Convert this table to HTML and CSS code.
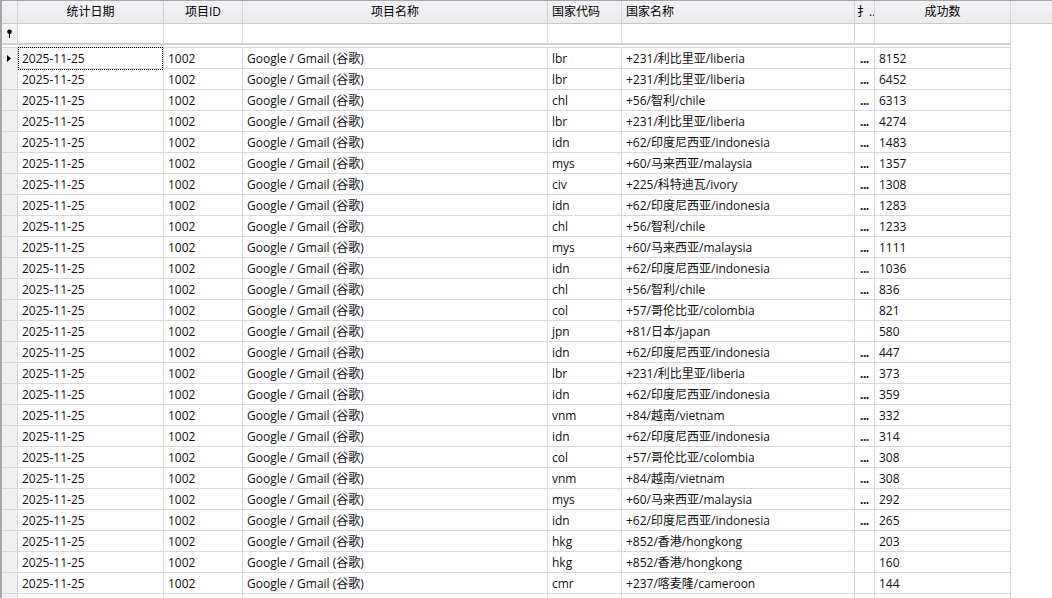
FILE: index.html
```html
<!DOCTYPE html>
<html>
<head>
<meta charset="utf-8">
<link rel="stylesheet" href="styles.css">
</head>
<body>
<div class="grid">
  <div class="row head">
    <div class="c ind"></div>
    <div class="c ctr">统计日期</div>
    <div class="c ctr">项目ID</div>
    <div class="c ctr">项目名称</div>
    <div class="c">国家代码</div>
    <div class="c">国家名称</div>
    <div class="c narrow">扌..</div>
    <div class="c ctr">成功数</div>
    <div class="c fill"></div>
  </div>
  <div class="row filter">
    <div class="c ind"><svg class="pin" width="7" height="9" viewBox="0 0 7 9"><circle cx="3.5" cy="2.8" r="2.3" fill="#000"/><rect x="3" y="4" width="1" height="5" fill="#000"/></svg></div>
    <div class="c"></div><div class="c"></div><div class="c"></div><div class="c"></div><div class="c"></div><div class="c"></div><div class="c"></div>
  </div>
  <div class="gap"></div>
  <div class="data">
    <div class="row"><div class="c ind"><svg class="tri" width="4" height="7" viewBox="0 0 4 7"><path d="M0 0L4 3.5L0 7Z" fill="#000"/></svg></div><div class="c focus">2025-11-25</div><div class="c">1002</div><div class="c">Google / Gmail (谷歌)</div><div class="c">lbr</div><div class="c">+231/利比里亚/liberia</div><div class="c dots">...</div><div class="c">8152</div></div>
    <div class="row"><div class="c ind"></div><div class="c">2025-11-25</div><div class="c">1002</div><div class="c">Google / Gmail (谷歌)</div><div class="c">lbr</div><div class="c">+231/利比里亚/liberia</div><div class="c dots">...</div><div class="c">6452</div></div>
    <div class="row"><div class="c ind"></div><div class="c">2025-11-25</div><div class="c">1002</div><div class="c">Google / Gmail (谷歌)</div><div class="c">chl</div><div class="c">+56/智利/chile</div><div class="c dots">...</div><div class="c">6313</div></div>
    <div class="row"><div class="c ind"></div><div class="c">2025-11-25</div><div class="c">1002</div><div class="c">Google / Gmail (谷歌)</div><div class="c">lbr</div><div class="c">+231/利比里亚/liberia</div><div class="c dots">...</div><div class="c">4274</div></div>
    <div class="row"><div class="c ind"></div><div class="c">2025-11-25</div><div class="c">1002</div><div class="c">Google / Gmail (谷歌)</div><div class="c">idn</div><div class="c">+62/印度尼西亚/indonesia</div><div class="c dots">...</div><div class="c">1483</div></div>
    <div class="row"><div class="c ind"></div><div class="c">2025-11-25</div><div class="c">1002</div><div class="c">Google / Gmail (谷歌)</div><div class="c">mys</div><div class="c">+60/马来西亚/malaysia</div><div class="c dots">...</div><div class="c">1357</div></div>
    <div class="row"><div class="c ind"></div><div class="c">2025-11-25</div><div class="c">1002</div><div class="c">Google / Gmail (谷歌)</div><div class="c">civ</div><div class="c">+225/科特迪瓦/ivory</div><div class="c dots">...</div><div class="c">1308</div></div>
    <div class="row"><div class="c ind"></div><div class="c">2025-11-25</div><div class="c">1002</div><div class="c">Google / Gmail (谷歌)</div><div class="c">idn</div><div class="c">+62/印度尼西亚/indonesia</div><div class="c dots">...</div><div class="c">1283</div></div>
    <div class="row"><div class="c ind"></div><div class="c">2025-11-25</div><div class="c">1002</div><div class="c">Google / Gmail (谷歌)</div><div class="c">chl</div><div class="c">+56/智利/chile</div><div class="c dots">...</div><div class="c">1233</div></div>
    <div class="row"><div class="c ind"></div><div class="c">2025-11-25</div><div class="c">1002</div><div class="c">Google / Gmail (谷歌)</div><div class="c">mys</div><div class="c">+60/马来西亚/malaysia</div><div class="c dots">...</div><div class="c">1111</div></div>
    <div class="row"><div class="c ind"></div><div class="c">2025-11-25</div><div class="c">1002</div><div class="c">Google / Gmail (谷歌)</div><div class="c">idn</div><div class="c">+62/印度尼西亚/indonesia</div><div class="c dots">...</div><div class="c">1036</div></div>
    <div class="row"><div class="c ind"></div><div class="c">2025-11-25</div><div class="c">1002</div><div class="c">Google / Gmail (谷歌)</div><div class="c">chl</div><div class="c">+56/智利/chile</div><div class="c dots">...</div><div class="c">836</div></div>
    <div class="row"><div class="c ind"></div><div class="c">2025-11-25</div><div class="c">1002</div><div class="c">Google / Gmail (谷歌)</div><div class="c">col</div><div class="c">+57/哥伦比亚/colombia</div><div class="c dots"></div><div class="c">821</div></div>
    <div class="row"><div class="c ind"></div><div class="c">2025-11-25</div><div class="c">1002</div><div class="c">Google / Gmail (谷歌)</div><div class="c">jpn</div><div class="c">+81/日本/japan</div><div class="c dots"></div><div class="c">580</div></div>
    <div class="row"><div class="c ind"></div><div class="c">2025-11-25</div><div class="c">1002</div><div class="c">Google / Gmail (谷歌)</div><div class="c">idn</div><div class="c">+62/印度尼西亚/indonesia</div><div class="c dots">...</div><div class="c">447</div></div>
    <div class="row"><div class="c ind"></div><div class="c">2025-11-25</div><div class="c">1002</div><div class="c">Google / Gmail (谷歌)</div><div class="c">lbr</div><div class="c">+231/利比里亚/liberia</div><div class="c dots">...</div><div class="c">373</div></div>
    <div class="row"><div class="c ind"></div><div class="c">2025-11-25</div><div class="c">1002</div><div class="c">Google / Gmail (谷歌)</div><div class="c">idn</div><div class="c">+62/印度尼西亚/indonesia</div><div class="c dots">...</div><div class="c">359</div></div>
    <div class="row"><div class="c ind"></div><div class="c">2025-11-25</div><div class="c">1002</div><div class="c">Google / Gmail (谷歌)</div><div class="c">vnm</div><div class="c">+84/越南/vietnam</div><div class="c dots">...</div><div class="c">332</div></div>
    <div class="row"><div class="c ind"></div><div class="c">2025-11-25</div><div class="c">1002</div><div class="c">Google / Gmail (谷歌)</div><div class="c">idn</div><div class="c">+62/印度尼西亚/indonesia</div><div class="c dots">...</div><div class="c">314</div></div>
    <div class="row"><div class="c ind"></div><div class="c">2025-11-25</div><div class="c">1002</div><div class="c">Google / Gmail (谷歌)</div><div class="c">col</div><div class="c">+57/哥伦比亚/colombia</div><div class="c dots">...</div><div class="c">308</div></div>
    <div class="row"><div class="c ind"></div><div class="c">2025-11-25</div><div class="c">1002</div><div class="c">Google / Gmail (谷歌)</div><div class="c">vnm</div><div class="c">+84/越南/vietnam</div><div class="c dots">...</div><div class="c">308</div></div>
    <div class="row"><div class="c ind"></div><div class="c">2025-11-25</div><div class="c">1002</div><div class="c">Google / Gmail (谷歌)</div><div class="c">mys</div><div class="c">+60/马来西亚/malaysia</div><div class="c dots">...</div><div class="c">292</div></div>
    <div class="row"><div class="c ind"></div><div class="c">2025-11-25</div><div class="c">1002</div><div class="c">Google / Gmail (谷歌)</div><div class="c">idn</div><div class="c">+62/印度尼西亚/indonesia</div><div class="c dots">...</div><div class="c">265</div></div>
    <div class="row"><div class="c ind"></div><div class="c">2025-11-25</div><div class="c">1002</div><div class="c">Google / Gmail (谷歌)</div><div class="c">hkg</div><div class="c">+852/香港/hongkong</div><div class="c dots"></div><div class="c">203</div></div>
    <div class="row"><div class="c ind"></div><div class="c">2025-11-25</div><div class="c">1002</div><div class="c">Google / Gmail (谷歌)</div><div class="c">hkg</div><div class="c">+852/香港/hongkong</div><div class="c dots"></div><div class="c">160</div></div>
    <div class="row"><div class="c ind"></div><div class="c">2025-11-25</div><div class="c">1002</div><div class="c">Google / Gmail (谷歌)</div><div class="c">cmr</div><div class="c">+237/喀麦隆/cameroon</div><div class="c dots"></div><div class="c">144</div></div>
    <div class="row"><div class="c ind"></div><div class="c"></div><div class="c"></div><div class="c"></div><div class="c"></div><div class="c"></div><div class="c dots"></div><div class="c"></div></div>
  </div>
</div>
</body>
</html>
```

FILE: styles.css
```css
html, body {
  margin: 0;
  padding: 0;
  background: #ffffff;
  overflow: hidden;
}

body {
  font-family: "Open Sans", "Noto Sans CJK SC", sans-serif;
  font-size: 12px;
  color: #101010;
}

.grid {
  width: 1052px;
  height: 598px;
  border-left: 2px solid #a6a6b0;
  box-sizing: border-box;
  overflow: hidden;
}

.row {
  display: grid;
  grid-template-columns: 16px 146px 79px 305px 74px 233px 20px 136px;
  height: 21px;
  box-sizing: border-box;
  border-bottom: 1px solid #d8d8e0;
  width: 1009px;
}

.c {
  box-sizing: border-box;
  border-right: 1px solid #d8d8e0;
  padding-left: 4px;
  padding-top: 1px;
  line-height: 20px;
  white-space: nowrap;
  overflow: hidden;
}

.ind {
  padding-left: 0;
  padding-top: 0;
  background: #f0f0f0;
  display: flex;
  align-items: center;
  justify-content: center;
}

.head {
  width: 1050px;
  height: 24px;
  border-top: 1px solid #a6a6b0;
  border-bottom: 1px solid #c8c8d2;
  background: linear-gradient(#f3f3f5, #ececf0);
  grid-template-columns: 16px 146px 79px 305px 74px 233px 20px 136px 1fr;
  color: #000;
}

.head .c {
  line-height: 22px;
  padding-top: 0;
  border-right-color: #d2d2da;
}

.head .ind {
  background: transparent;
}

.head .ctr {
  text-align: center;
  padding-left: 0;
}

.head .narrow {
  padding-left: 2px;
}

.head .fill {
  border-right: none;
}

.filter {
  height: 21px;
  border-bottom: 2px solid #d2d2da;
}

.filter .ind {
  background: #f4f4f4;
}

.pin {
  display: block;
}

.gap {
  height: 2px;
}

.data {
  border-top: 1px solid #d8d8e0;
  width: 1009px;
}

.data .ind {
  justify-content: flex-start;
  padding-left: 5px;
}

.tri {
  display: block;
}

.dots {
  padding-left: 5px;
  font-weight: 700;
  letter-spacing: -0.5px;
}

.focus {
  position: relative;
  overflow: visible;
}

.focus::after {
  content: "";
  position: absolute;
  top: -1px;
  left: 0;
  right: 0;
  bottom: -1px;
  border: 1px dotted #000;
}
```
